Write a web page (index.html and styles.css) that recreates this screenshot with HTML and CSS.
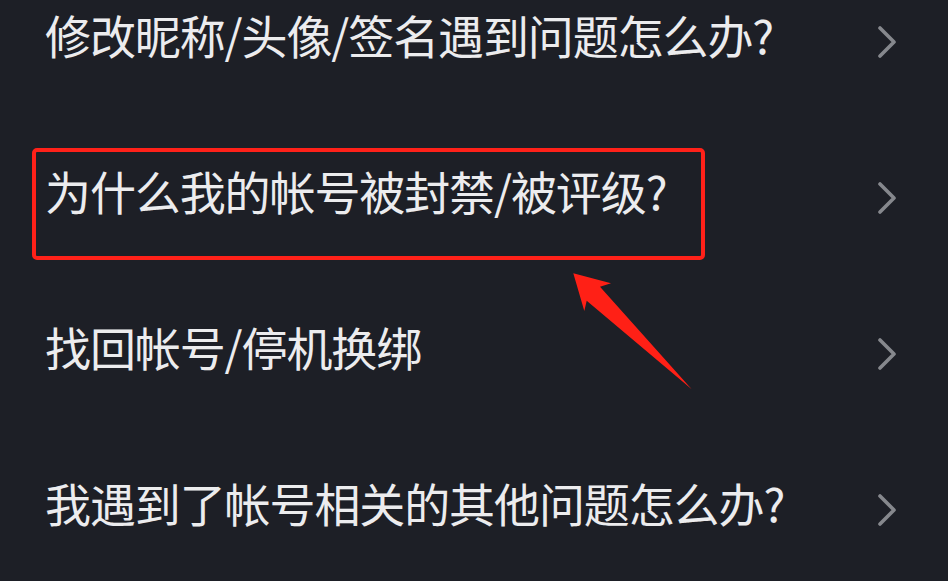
FILE: index.html
```html
<!DOCTYPE html>
<html lang="zh-CN">
<head>
<meta charset="utf-8">
<title>帐号问题</title>
<link rel="stylesheet" href="styles.css">
</head>
<body>
<div class="page">
  <ul class="list">
    <li class="row">
      <span class="label">修改昵称/头像/签名遇到问题怎么办?</span>
      <svg class="chev" viewBox="0 0 20 32" width="20" height="32"><polyline points="3,2 17,16 3,30"/></svg>
    </li>
    <li class="row">
      <span class="label">为什么我的帐号被封禁/被评级?</span>
      <svg class="chev" viewBox="0 0 20 32" width="20" height="32"><polyline points="3,2 17,16 3,30"/></svg>
    </li>
    <li class="row">
      <span class="label">找回帐号/停机换绑</span>
      <svg class="chev" viewBox="0 0 20 32" width="20" height="32"><polyline points="3,2 17,16 3,30"/></svg>
    </li>
    <li class="row">
      <span class="label">我遇到了帐号相关的其他问题怎么办?</span>
      <svg class="chev" viewBox="0 0 20 32" width="20" height="32"><polyline points="3,2 17,16 3,30"/></svg>
    </li>
  </ul>
  <div class="highlight"></div>
  <svg class="pointer" viewBox="0 0 130 125" width="130" height="125">
    <polygon points="3.3,3.3 41,13.3 30,16.7 121.7,119.3 16.7,30.7 14.3,41"/>
  </svg>
</div>
</body>
</html>
```

FILE: styles.css
```css
html, body {
  margin: 0;
  padding: 0;
  background: #1d1f26;
}
.page {
  position: relative;
  width: 948px;
  height: 581px;
  overflow: hidden;
  background: #1d1f26;
  font-family: "Noto Sans CJK SC", "Noto Sans", sans-serif;
}
.list {
  list-style: none;
  margin: -44px 0 0 0;
  padding: 0;
}
.row {
  height: 156px;
  display: flex;
  align-items: center;
  justify-content: space-between;
  padding: 0 51px 0 45px;
}
.label {
  font-size: 46px;
  line-height: 46px;
  letter-spacing: -1.1px;
  color: #ececee;
  white-space: nowrap;
}
.chev {
  margin-top: 16px;
  flex: none;
}
.chev polyline {
  fill: none;
  stroke: #86888d;
  stroke-width: 3.6;
  stroke-linecap: round;
  stroke-linejoin: round;
}
.highlight {
  position: absolute;
  left: 32px;
  top: 148px;
  width: 665px;
  height: 104px;
  border: 4px solid #ff2119;
  border-radius: 5px;
}
.pointer {
  position: absolute;
  left: 570px;
  top: 270px;
}
.pointer polygon {
  fill: #ff2016;
}
```
